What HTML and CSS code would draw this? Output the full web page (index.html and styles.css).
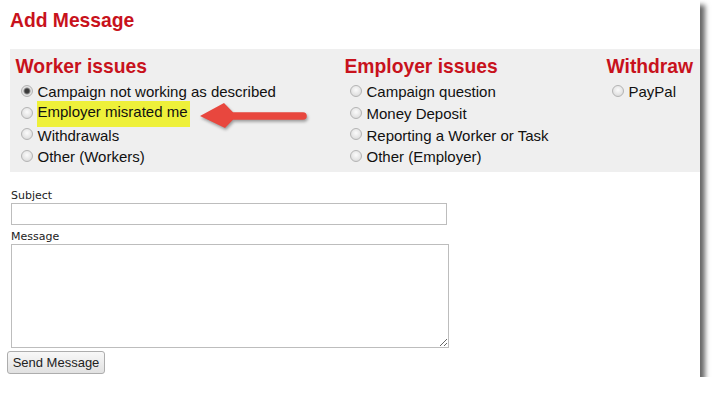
FILE: index.html
```html
<!DOCTYPE html>
<html lang="en">
<head>
<meta charset="utf-8">
<title>Add Message</title>
<link rel="stylesheet" href="styles.css">
</head>
<body>
<div class="window">
  <h1 class="title">Add Message</h1>
  <div class="issues">
    <div class="col">
      <h2 class="col-head">Worker issues</h2>
      <label class="opt"><input type="radio" name="topic" class="radio" checked>Campaign not working as described</label>
      <label class="opt"><input type="radio" name="topic" class="radio"><span class="hl">Employer misrated me</span></label>
      <label class="opt"><input type="radio" name="topic" class="radio">Withdrawals</label>
      <label class="opt"><input type="radio" name="topic" class="radio">Other (Workers)</label>
    </div>
    <div class="col">
      <h2 class="col-head">Employer issues</h2>
      <label class="opt"><input type="radio" name="topic" class="radio">Campaign question</label>
      <label class="opt"><input type="radio" name="topic" class="radio">Money Deposit</label>
      <label class="opt"><input type="radio" name="topic" class="radio">Reporting a Worker or Task</label>
      <label class="opt"><input type="radio" name="topic" class="radio">Other (Employer)</label>
    </div>
    <div class="col">
      <h2 class="col-head">Withdraw</h2>
      <label class="opt"><input type="radio" name="topic" class="radio">PayPal</label>
    </div>
  </div>
  <form class="form">
    <label class="field-label" for="subject">Subject</label>
    <input id="subject" class="subject" type="text">
    <label class="field-label msg-label" for="message">Message</label>
    <textarea id="message" class="message"></textarea>
    <button type="button" class="send">Send Message</button>
  </form>
  <svg class="arrow" width="120" height="40" viewBox="0 0 120 40" aria-hidden="true">
    <path d="M5 18 L29 5 L38 14.2 L108 14.2 A3.8 3.8 0 0 1 108 21.8 L38 21.8 L30 30 Z" fill="#e8473e"/>
  </svg>
</div>
</body>
</html>
```
FILE: styles.css
```css
html, body {
  margin: 0;
  padding: 0;
  background: #fff;
}

.window {
  position: relative;
  width: 700px;
  height: 377px;
  overflow: hidden;
  background: #fff;
  box-shadow: 5px 5px 5px rgba(0, 0, 0, 0.6);
  font-family: "Liberation Sans", Arial, sans-serif;
}

.title {
  margin: 0;
  padding: 10px 0 0 10px;
  font: bold 19.3px/22px "Liberation Sans", Arial, sans-serif;
  color: #c8121c;
}

.issues {
  margin: 17px 0 0 10px;
  width: 720px;
  box-sizing: border-box;
  background: #efefef;
  padding: 7px 0 4px 5.5px;
  display: grid;
  grid-template-columns: 329px 262px 1fr;
}

.col {
  display: flex;
  flex-direction: column;
}

.col-head {
  margin: 0 0 3px 0;
  font: bold 19.3px/22px "Liberation Sans", Arial, sans-serif;
  color: #c8121c;
  white-space: nowrap;
}

.opt {
  display: flex;
  align-items: center;
  height: 21.8px;
  font-size: 15px;
  line-height: 21.8px;
  color: #111;
  white-space: nowrap;
}

.radio {
  appearance: none;
  -webkit-appearance: none;
  box-sizing: border-box;
  width: 12px;
  height: 12px;
  margin: 0 4.5px 2px 5.5px;
  border: 1px solid #b4b4b4;
  border-radius: 50%;
  background: radial-gradient(circle at 50% 40%, #fbfbfb 0, #e6e6e6 55%, #d2d2d2 100%);
  flex: none;
}

.radio:checked {
  background: radial-gradient(circle at 50% 50%, #383838 0, #3c3c3c 2px, #8c8c8c 3px, #e6e6e6 4px, #d2d2d2 100%);
}

.hl {
  background: #eef03a;
  padding: 0 2px 4.5px 1px;
  margin-left: -1px;
}

.form {
  padding: 16.5px 0 0 11px;
  margin: 0;
}

.field-label {
  display: block;
  font: 11px/14px "DejaVu Sans", Verdana, sans-serif;
  color: #222;
}

.msg-label {
  margin-top: 5px;
}

.subject {
  display: block;
  box-sizing: border-box;
  width: 436px;
  height: 22px;
  margin: 0;
  border: 1px solid #bdbdbd;
  background: #fff;
}

.message {
  display: block;
  box-sizing: border-box;
  width: 437.5px;
  height: 104px;
  margin: 0;
  border: 1px solid #bdbdbd;
  background: #fff;
  resize: both;
}

.send {
  display: block;
  box-sizing: border-box;
  margin: 3.7px 0 0 -4px;
  width: 98px;
  height: 22.3px;
  padding: 0;
  text-align: center;
  white-space: nowrap;
  font: 13px "Liberation Sans", Arial, sans-serif;
  color: #222;
  background: linear-gradient(#f8f8f8, #e1e1e1);
  border: 1px solid #adadad;
  border-radius: 3px;
}

.arrow {
  position: absolute;
  left: 195px;
  top: 98px;
  filter: drop-shadow(1px 2px 1.5px rgba(0, 0, 0, 0.35));
}
```
